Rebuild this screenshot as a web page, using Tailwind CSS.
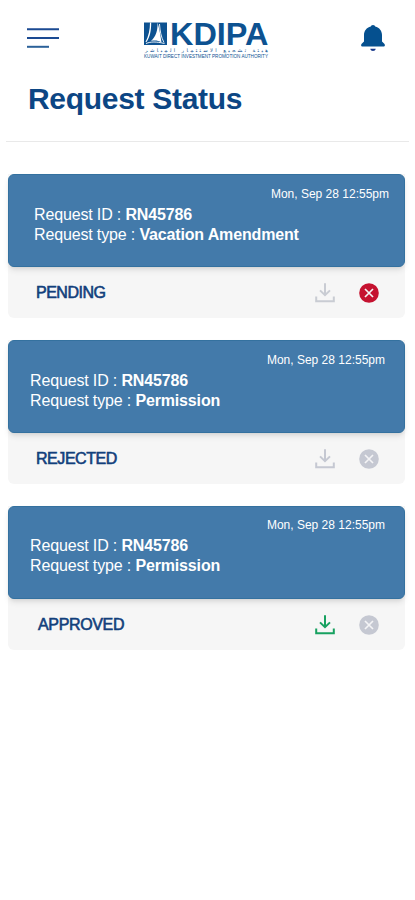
<!DOCTYPE html>
<html lang="en">
<head>
<meta charset="utf-8">
<meta name="viewport" content="width=device-width, initial-scale=1">
<title>Request Status</title>
<script src="https://cdn.jsdelivr.net/npm/@tailwindcss/browser@4"></script>
</head>
<body class="min-h-screen overflow-hidden bg-white font-['Liberation_Sans',Arial,sans-serif]">
<svg class="hidden">
  <symbol id="download" viewBox="0 0 20 20"><path d="M10 .3V12M5 7.400 10 12.200l5-4.800M1.200 13.500v4.700h17.600v-4.700" fill="none" stroke="currentColor" stroke-width="2"/></symbol>
  <symbol id="cancel" viewBox="0 0 20 20"><circle cx="10" cy="10" r="9.8" fill="currentColor"/><path d="m6 6 8 8m0-8-8 8" stroke="#f4f4f6" stroke-width="1.7"/></symbol>
</svg>
<header class="flex h-[76px] items-start pl-[27px] pr-[30px]">
  <svg class="mt-7 h-5 w-8 shrink-0" viewBox="0 0 32 20" stroke-width="2"><path d="M0 1.3h32M0 10.1h32" stroke="#1b4a92"/><path d="M0 18.8h22" stroke="#2b6199"/></svg>
  <svg class="ml-[85px] mt-[18px] h-[44px] w-[126px] shrink-0 overflow-visible" viewBox="0 -2 126 44" fill="#0d5291">
    <path d="M0 2.500h23V25H0Z"/>
    <path d="M6 2.500h1.200c0 8-1 14-4.700 19.500H1.500C4.500 16 6 10 6 2.500Z" fill="#fff"/>
    <path d="M13.500 2.500c.3 8-1.500 14-6.500 18.500 4-1 7-.5 10.500 1.500C16.500 16 15.500 9 13.500 2.500Z" fill="#fff"/>
    <path d="M2 23.500c5-2 10-2 18.500 0M15.500 4c.5 7 1.500 13 4.500 18.500" fill="none" stroke="#fff" stroke-width=".9"/>
    <text x="26" y="25" font-size="32" font-weight="700" textLength="98.500" lengthAdjust="spacingAndGlyphs">KDIPA</text>
    <text x="124" y="31.800" font-size="5" direction="rtl" font-family="DejaVu Sans" textLength="123" lengthAdjust="spacing">هيئة تشجيع الاستثمار المباشر</text>
    <text x="0" y="38" font-size="4.600" textLength="124" lengthAdjust="spacingAndGlyphs">KUWAIT DIRECT INVESTMENT PROMOTION AUTHORITY</text>
  </svg>
  <svg class="ml-auto mt-[25px] h-[27px] w-6 shrink-0" viewBox="0 0 24 27" fill="#05508f"><path d="M12 0c1.400 0 2 .8 2.200 1.500C18.500 2.500 21 6 21 10v6.500l2.300 2.300c1.200 1.400.5 2.700-1 2.700H1.700c-1.500 0-2.200-1.300-1-2.700L3 16.500V10c0-4 2.500-7.500 6.800-8.500C10 .8 10.600 0 12 0Z"/><path d="M9.300 23.700h5.400c-.3 3-5.100 3-5.400 0Z" fill="#17388a"/></svg>
</header>
<h1 class="ml-[28px] h-[65px] pt-[5px] text-[30px] leading-9 font-bold tracking-[-0.3px] text-[#0c4684]">Request Status</h1>
<div class="mx-[6px] h-px bg-[#e9e9e9]"></div>
<main class="mt-8 ml-[8px] flex w-[397px] flex-col gap-[22px]">
  <section class="h-[144px] rounded-b-md bg-[#f6f6f6]">
    <div class="h-[93px] rounded-md border border-[#34719f] bg-[#437aaa] pl-[25px] pr-[15px] pt-[11px] text-white shadow-md">
      <p class="text-right text-xs leading-4">Mon, Sep 28 12:55pm</p>
      <div class="mt-[3px] text-[16px] leading-5 tracking-[-0.15px]"><p>Request ID : <b>RN45786</b></p><p>Request type : <b>Vacation Amendment</b></p></div>
    </div>
    <div class="flex h-[51px] items-center pl-[28px] pr-[26px]">
      <span class="pt-px text-[16px] tracking-[-0.5px] text-[#123f7c] [-webkit-text-stroke:0.6px_#123f7c]">PENDING</span>
      <svg class="mr-6 ml-auto size-5 text-[#c9ccd3]"><use href="#download"/></svg>
      <svg class="size-5 text-[#c51230]"><use href="#cancel"/></svg>
    </div>
  </section>
  <section class="h-[144px] rounded-b-md bg-[#f6f6f6]">
    <div class="h-[93px] rounded-md border border-[#34719f] bg-[#437aaa] pl-[21px] pr-[19px] pt-[11px] text-white shadow-md">
      <p class="text-right text-xs leading-4">Mon, Sep 28 12:55pm</p>
      <div class="mt-[3px] text-[16px] leading-5 tracking-[-0.15px]"><p>Request ID : <b>RN45786</b></p><p>Request type : <b>Permission</b></p></div>
    </div>
    <div class="flex h-[51px] items-center pl-[28px] pr-[26px]">
      <span class="text-[16px] tracking-[-0.45px] text-[#123f7c] [-webkit-text-stroke:0.6px_#123f7c]">REJECTED</span>
      <svg class="mr-6 ml-auto size-5 text-[#c5c8d2]"><use href="#download"/></svg>
      <svg class="size-5 text-[#c5c8d2]"><use href="#cancel"/></svg>
    </div>
  </section>
  <section class="h-[144px] rounded-b-md bg-[#f6f6f6]">
    <div class="h-[93px] rounded-md border border-[#34719f] bg-[#437aaa] pl-[21px] pr-[19px] pt-[10px] text-white shadow-md">
      <p class="text-right text-xs leading-4">Mon, Sep 28 12:55pm</p>
      <div class="mt-[3px] text-[16px] leading-5 tracking-[-0.15px]"><p>Request ID : <b>RN45786</b></p><p>Request type : <b>Permission</b></p></div>
    </div>
    <div class="flex h-[51px] items-center pl-[30px] pr-[26px]">
      <span class="text-[16px] tracking-[-0.35px] text-[#123f7c] [-webkit-text-stroke:0.6px_#123f7c]">APPROVED</span>
      <svg class="mr-6 ml-auto size-5 text-[#17a160]"><use href="#download"/></svg>
      <svg class="size-5 text-[#c5c8d2]"><use href="#cancel"/></svg>
    </div>
  </section>
</main>
</body>
</html>
